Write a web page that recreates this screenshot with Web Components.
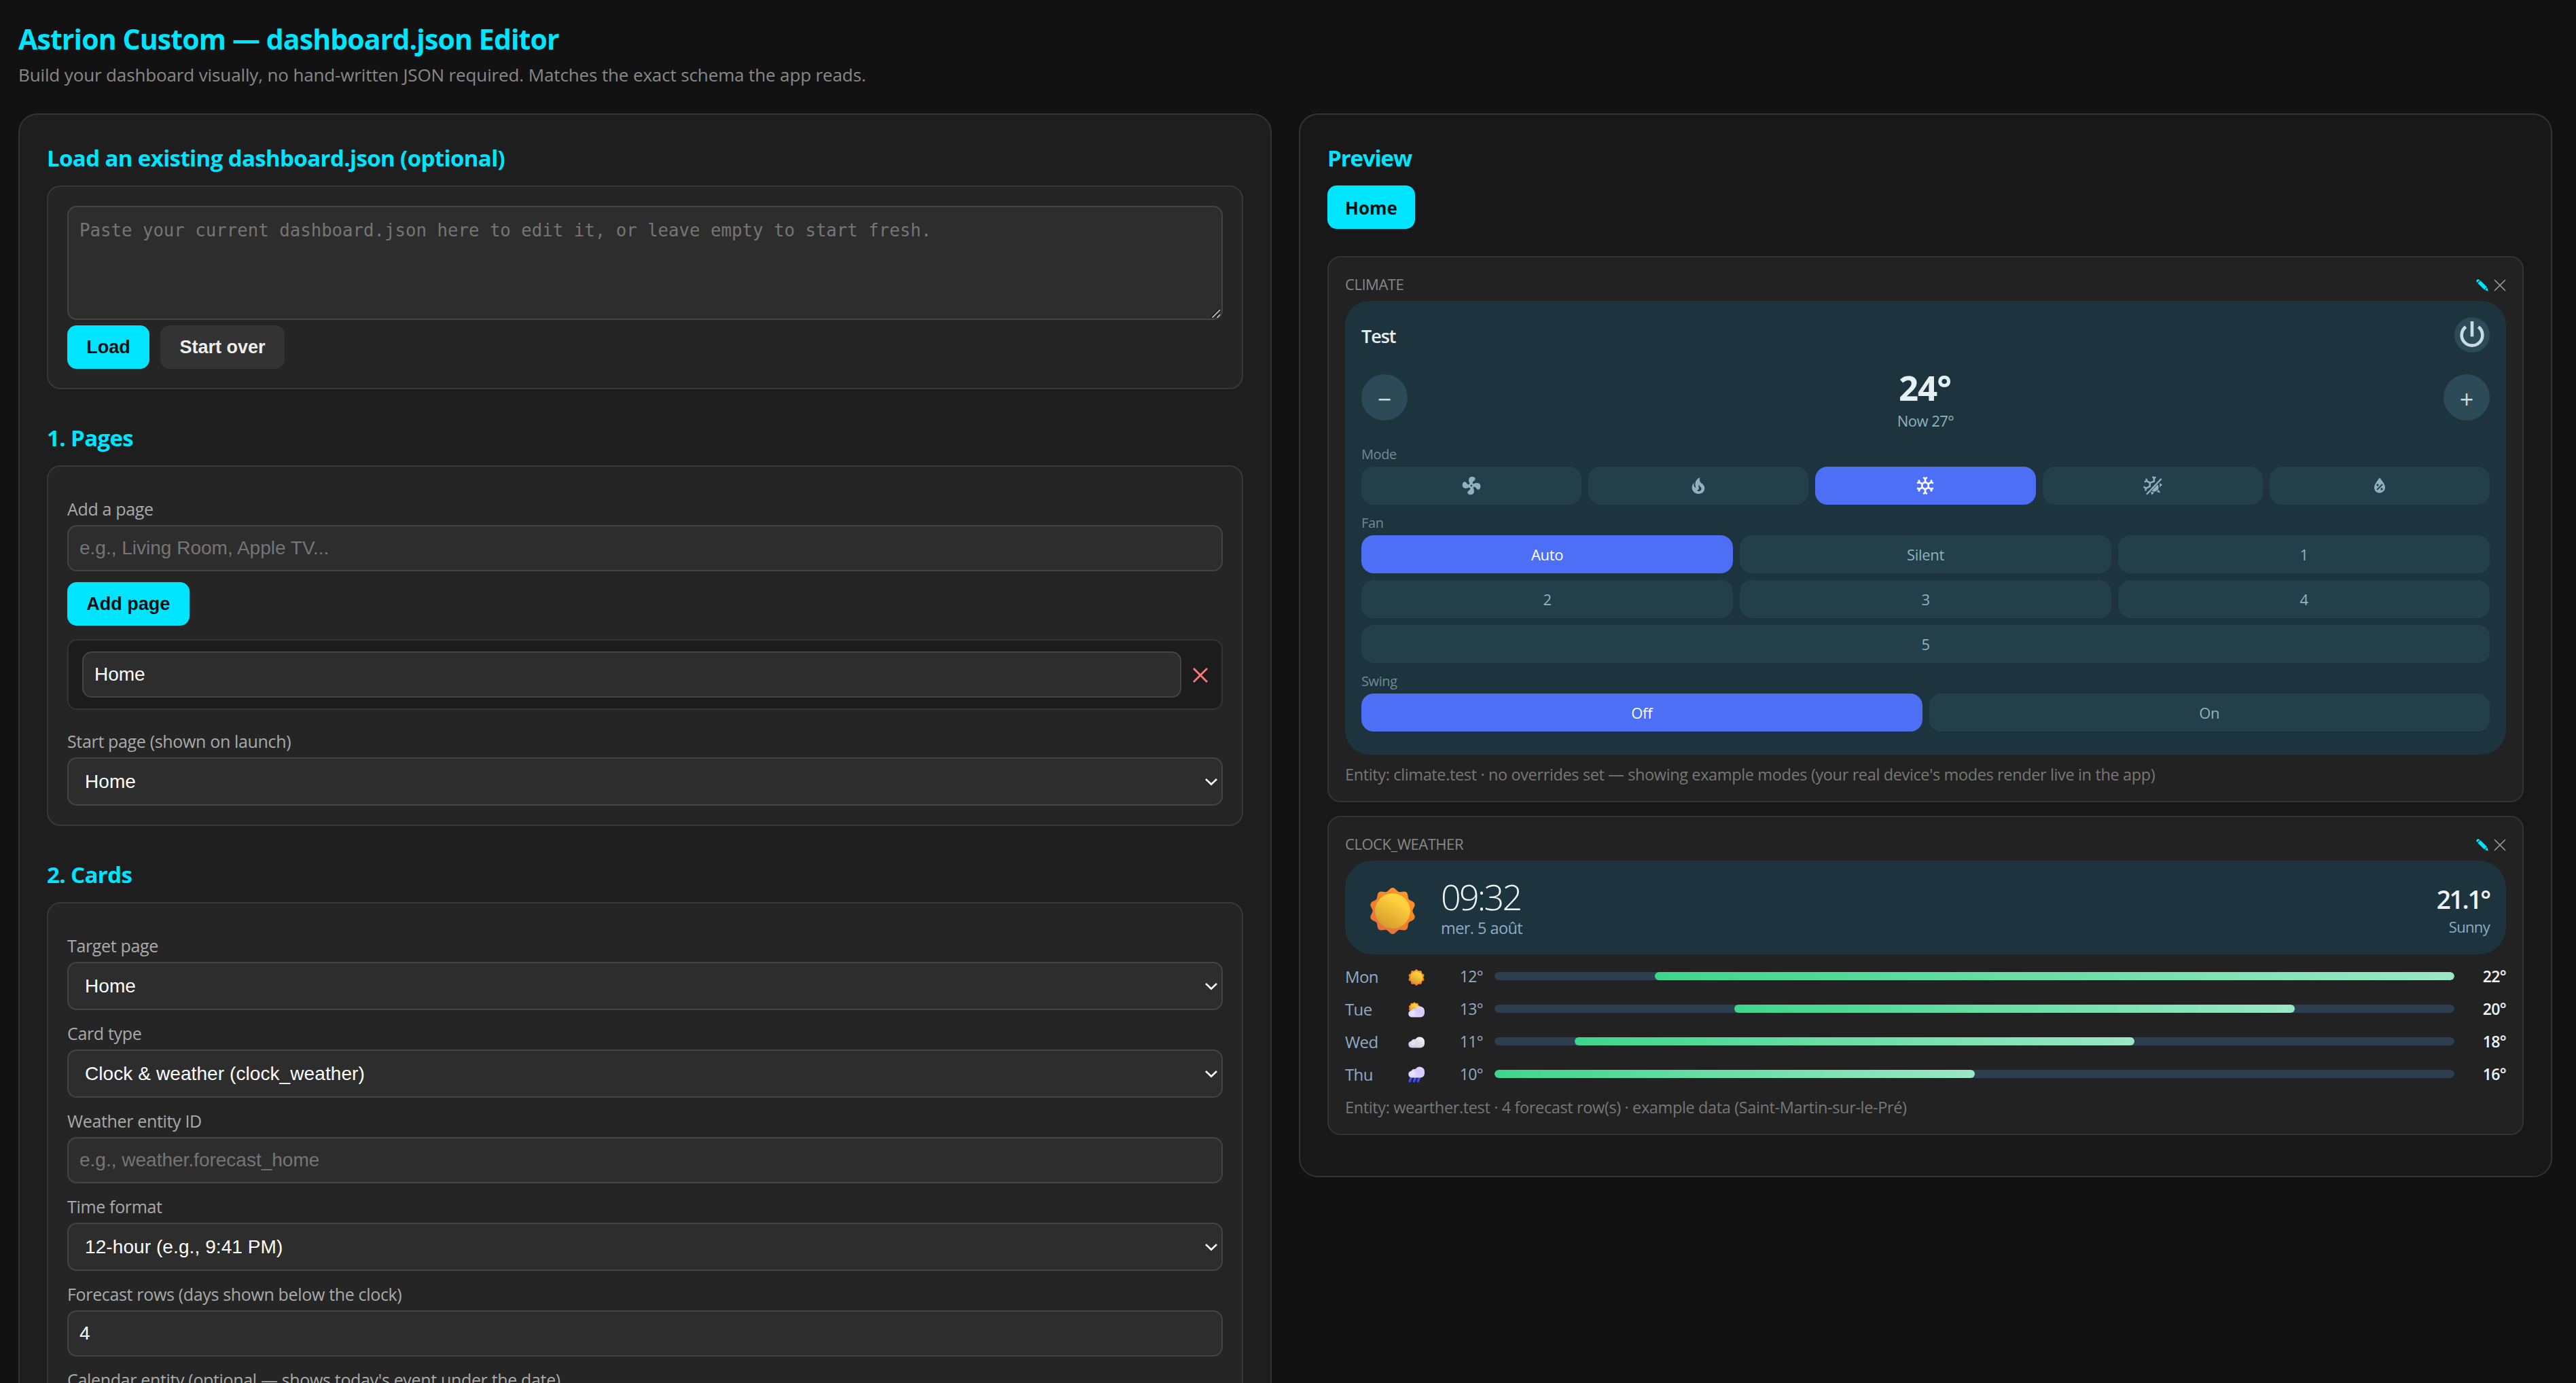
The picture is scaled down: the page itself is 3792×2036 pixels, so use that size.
<!DOCTYPE html>
<html lang="en">
<head>
<meta charset="utf-8">
<title>Astrion Custom — dashboard.json Editor</title>
<style>
    html, body {
        margin: 0;
        height: 100%;
        overflow: hidden;
        background: #121212;
    }
    body {
        font-family: "Open Sans", "Noto Sans", sans-serif;
        color: #eee;
    }
</style>
</head>
<body>

<editor-app>
    <app-panel slot="editor">
        <panel-section heading="Load an existing dashboard.json (optional)">
            <json-input placeholder="Paste your current dashboard.json here to edit it, or leave empty to start fresh."></json-input>
            <button-row>
                <ui-button>Load</ui-button>
                <ui-button kind="secondary">Start over</ui-button>
            </button-row>
        </panel-section>

        <panel-section heading="1. Pages">
            <text-field label="Add a page" placeholder="e.g., Living Room, Apple TV..."></text-field>
            <button-row spaced><ui-button>Add page</ui-button></button-row>
            <page-row value="Home"></page-row>
            <select-field label="Start page (shown on launch)" value="Home"></select-field>
        </panel-section>

        <panel-section heading="2. Cards">
            <select-field label="Target page" value="Home"></select-field>
            <select-field label="Card type" value="Clock &amp; weather (clock_weather)"></select-field>
            <text-field label="Weather entity ID" placeholder="e.g., weather.forecast_home"></text-field>
            <select-field label="Time format" value="12-hour (e.g., 9:41 PM)"></select-field>
            <text-field label="Forecast rows (days shown below the clock)" value="4"></text-field>
            <text-field label="Calendar entity (optional — shows today's event under the date)"></text-field>
        </panel-section>
    </app-panel>

    <app-panel slot="preview" dark>
        <preview-tabs heading="Preview"><span>Home</span></preview-tabs>

        <preview-card type="CLIMATE">
            <climate-card name="Test" target="24°" current="Now 27°">
                <chip-group label="Mode" columns="5">
                    <mode-chip icon="fan"></mode-chip>
                    <mode-chip icon="fire"></mode-chip>
                    <mode-chip icon="snow" active></mode-chip>
                    <mode-chip icon="auto"></mode-chip>
                    <mode-chip icon="dry"></mode-chip>
                </chip-group>
                <chip-group label="Fan" columns="3">
                    <mode-chip active>Auto</mode-chip>
                    <mode-chip>Silent</mode-chip>
                    <mode-chip>1</mode-chip>
                    <mode-chip>2</mode-chip>
                    <mode-chip>3</mode-chip>
                    <mode-chip>4</mode-chip>
                    <mode-chip wide>5</mode-chip>
                </chip-group>
                <chip-group label="Swing" columns="2">
                    <mode-chip active>Off</mode-chip>
                    <mode-chip>On</mode-chip>
                </chip-group>
            </climate-card>
            <span slot="info">Entity: climate.test · no overrides set — showing example modes (your real device's modes render live in the app)</span>
        </preview-card>

        <preview-card type="CLOCK_WEATHER">
            <clock-weather time="09:32" date="mer. 5 août" temp="21.1°" state="Sunny"></clock-weather>
            <forecast-list>
                <forecast-row day="Mon" icon="sun" low="12" high="22"></forecast-row>
                <forecast-row day="Tue" icon="partly" low="13" high="20"></forecast-row>
                <forecast-row day="Wed" icon="cloud" low="11" high="18"></forecast-row>
                <forecast-row day="Thu" icon="rain" low="10" high="16"></forecast-row>
            </forecast-list>
            <span slot="info">Entity: wearther.test · 4 forecast row(s) · example data (Saint-Martin-sur-le-Pré)</span>
        </preview-card>
    </app-panel>
</editor-app>

<script>
const define = (name, render) => {
    customElements.define(name, class extends HTMLElement {
        constructor() {
            super()
            this.attachShadow({ mode: 'open' })
        }
        connectedCallback() {
            this.shadowRoot.innerHTML = render(this)
        }
    })
}

const attr = (el, name) => (el.getAttribute(name) || '').replace(/&/g, '&amp;').replace(/"/g, '&quot;')

// 24x24 glyphs for the climate modes
const modeIcons = {
    fan: '<path d="M12,11A1,1 0 0,0 11,12A1,1 0 0,0 12,13A1,1 0 0,0 13,12A1,1 0 0,0 12,11M12.5,2C17,2 17.11,5.57 14.75,6.75C13.76,7.24 13.32,8.29 13.13,9.22C13.61,9.42 14.03,9.73 14.35,10.13C18.05,8.13 22.03,8.92 22.03,12.5C22.03,17 18.46,17.1 17.28,14.73C16.78,13.74 15.72,13.3 14.79,13.11C14.59,13.59 14.28,14 13.88,14.34C15.87,18.03 15.08,22 11.5,22C7,22 6.91,18.42 9.27,17.24C10.25,16.75 10.69,15.71 10.89,14.79C10.4,14.59 9.97,14.27 9.65,13.87C5.96,15.85 2,15.07 2,11.5C2,7 5.56,6.89 6.74,9.26C7.24,10.25 8.29,10.68 9.22,10.87C9.41,10.39 9.73,9.97 10.14,9.65C8.15,5.96 8.94,2 12.5,2Z"/>',
    fire: '<path d="M17.66 11.2C17.43 10.9 17.15 10.64 16.89 10.38C16.22 9.78 15.46 9.35 14.82 8.72C13.33 7.26 13 4.85 13.95 3C13 3.23 12.17 3.75 11.46 4.32C8.87 6.4 7.85 10.07 9.07 13.22C9.11 13.32 9.15 13.42 9.15 13.55C9.15 13.77 9 13.97 8.8 14.05C8.57 14.15 8.33 14.09 8.14 13.93C8.08 13.88 8.04 13.83 8 13.76C6.87 12.33 6.69 10.28 7.45 8.64C5.78 10 4.87 12.3 5 14.47C5.06 14.97 5.12 15.47 5.29 15.97C5.43 16.57 5.7 17.17 6 17.7C7.08 19.43 8.95 20.67 10.96 20.92C13.1 21.19 15.39 20.8 17.03 19.32C18.86 17.66 19.5 15 18.56 12.72L18.43 12.46C18.22 12 17.66 11.2 17.66 11.2M14.5 17.5C14.22 17.74 13.76 18 13.4 18.1C12.28 18.5 11.16 17.94 10.5 17.28C11.69 17 12.4 16.12 12.61 15.23C12.78 14.43 12.46 13.77 12.33 13C12.21 12.26 12.23 11.63 12.5 10.94C12.69 11.32 12.89 11.7 13.13 12C13.9 13 15.11 13.44 15.37 14.8C15.41 14.94 15.43 15.08 15.43 15.23C15.46 16.05 15.1 16.95 14.5 17.5Z"/>',
    snow: '<path d="M20.79,13.95L18.46,14.57L16.46,13.44V10.56L18.46,9.43L20.79,10.05L21.31,8.12L19.54,7.65L20,5.88L18.07,5.36L17.45,7.69L15.45,8.82L13,7.38V5.12L14.71,3.41L13.29,2L12,3.29L10.71,2L9.29,3.41L11,5.12V7.38L8.5,8.82L6.5,7.69L5.92,5.36L4,5.88L4.47,7.65L2.7,8.12L3.22,10.05L5.55,9.43L7.55,10.56V13.45L5.55,14.58L3.22,13.96L2.7,15.89L4.47,16.36L4,18.12L5.93,18.64L6.55,16.31L8.55,15.18L11,16.62V18.88L9.29,20.59L10.71,22L12,20.71L13.29,22L14.7,20.59L13,18.88V16.62L15.5,15.17L17.5,16.3L18.12,18.63L20,18.12L19.53,16.35L21.3,15.88L20.79,13.95M9.5,10.56L12,9.11L14.5,10.56V13.44L12,14.89L9.5,13.44V10.56Z"/>',
    auto: '<path d="M21.5 4.3 5.2 21.6" stroke="currentColor" stroke-width="1.8"/><path d="M11.7 2 13.4 3.8 15.3 2.4M13.4 3.8V7.2L8.8 8.9 5.2 6.7M2.8 7.8 5.2 6.7 4.8 4.2M8.8 8.9V12.8L4.4 15M2 13.2 4.4 15 4 17.6" fill="none" stroke="currentColor" stroke-width="1.9"/><path d="M17.4 10.6A4.9 4.9 0 0 1 10.8 17.6ZM19.6 9 22.6 11.1 19.6 13.6ZM18 16.2 20.6 19.8 16.5 19ZM9.7 18.8 13.6 19.4 11 22.4Z"/>',
    dry: '<path d="M12,3.25C12,3.25 6,10 6,14C6,17.32 8.69,20 12,20A6,6 0 0,0 18,14C18,10 12,3.25 12,3.25M14.47,9.97L15.53,11.03L9.53,17.03L8.47,15.97M9.75,10A1.25,1.25 0 0,1 11,11.25A1.25,1.25 0 0,1 9.75,12.5A1.25,1.25 0 0,1 8.5,11.25A1.25,1.25 0 0,1 9.75,10M14.25,14.5A1.25,1.25 0 0,1 15.5,15.75A1.25,1.25 0 0,1 14.25,17A1.25,1.25 0 0,1 13,15.75A1.25,1.25 0 0,1 14.25,14.5Z" fill-rule="evenodd"/>',
}

const gradients = `
    <defs>
        <linearGradient id="disc" x1=".75" y1=".1" x2=".25" y2="1"><stop offset=".15" stop-color="#ffd13e"/><stop offset="1" stop-color="#d4982c"/></linearGradient>
        <linearGradient id="rays" x1=".8" y1="0" x2=".2" y2="1"><stop offset="0" stop-color="#ff9a2e"/><stop offset=".45" stop-color="#f58220"/><stop offset="1" stop-color="#e2704a"/></linearGradient>
        <linearGradient id="lilac" x1="0" y1="1" x2="1" y2="0"><stop offset="0" stop-color="#e9defa"/><stop offset=".6" stop-color="#d3cafb"/><stop offset="1" stop-color="#e4dffc"/></linearGradient>
        <linearGradient id="white" x1="0" y1="1" x2="1" y2="0"><stop offset="0" stop-color="#cfc6ea"/><stop offset=".55" stop-color="#dedce6"/><stop offset="1" stop-color="#ffffff"/></linearGradient>
    </defs>`

// scalloped sun, 10 petals around (cx, cy)
const sunShape = (cx, cy, r) => {
    let d = ''
    for (let i = 0; i <= 120; i++) {
        const a = i / 120 * Math.PI * 2
        const k = r * (0.93 + 0.07 * Math.cos(a * 10))
        d += `${i ? 'L' : 'M'}${(cx + k * Math.sin(a)).toFixed(2)} ${(cy - k * Math.cos(a)).toFixed(2)}`
    }
    return `<path d="${d}Z" fill="url(#rays)"/><circle cx="${cx}" cy="${cy}" r="${r * .76}" fill="url(#disc)"/>`
}

const cloudShape = (y, fill) => `<g transform="translate(0 ${y})"><path d="M5 15.5A5 5 0 0 1 4.4 5.6A5.2 5.2 0 0 1 10.6 3A7.2 7.2 0 0 1 24 6.6V9.5A6 6 0 0 1 18 15.5Z" fill="url(#${fill})"/><circle cx="7" cy="9" r="3.6" fill="#fff" opacity=".3"/></g>`

const weatherIcons = {
    sun: sunShape(12, 12, 12),
    partly: sunShape(9, 9, 8.6) + cloudShape(7, 'lilac'),
    cloud: cloudShape(4, 'white'),
    rain: '<path d="M4.2 15.5 2.2 20.6M10.6 15.5 8.6 20.6M16.4 15.5 14.4 20.6" stroke="#3c50f0" stroke-width="3.6" stroke-linecap="round"/>' + cloudShape(0, 'lilac'),
}

define('editor-app', () => `
    <style>
        :host { display: block; max-width: 3730px; padding: 27px; }
        h1 { margin: 0; font-size: 41px; line-height: 60px; font-weight: 700; letter-spacing: -0.0215em; color: #00e5ff; white-space: nowrap; }
        p { margin: 5px 0 39px; font-size: 26px; line-height: 36px; letter-spacing: -0.005em; color: #888; }
        .columns { display: grid; grid-template-columns: 1fr 1fr; gap: 40px; align-items: start; }
    </style>
    <h1>Astrion Custom — dashboard.json Editor</h1>
    <p>Build your dashboard visually, no hand-written JSON required. Matches the exact schema the app reads.</p>
    <div class="columns">
        <slot name="editor"></slot>
        <slot name="preview"></slot>
    </div>
`)

define('app-panel', () => `
    <style>
        :host { display: block; box-sizing: border-box; padding: 40px; background: #1e1e1e; border: 2px solid #333; border-radius: 28px; }
        :host([dark]) { background: #181818; }
    </style>
    <slot></slot>
`)

define('panel-section', el => `
    <style>
        :host { display: block; margin-bottom: 48px; }
        h2 { margin: 0; padding: 1px 0 17px; font-size: 33px; line-height: 46px; font-weight: 700; letter-spacing: -0.0185em; color: #00e5ff; }
        .box { padding: 28px; background: #252525; border: 2px solid #383838; border-radius: 20px; }
    </style>
    <h2>${attr(el, 'heading')}</h2>
    <div class="box"><slot></slot></div>
`)

define('json-input', el => `
    <style>
        :host { display: block; position: relative; height: 168px; margin-bottom: 8px; }
        textarea {
            display: block; box-sizing: border-box; width: 100%; height: 100%; padding: 16px; margin: 0;
            background: #2d2d2d; color: #fff; border: 2px solid #444; border-radius: 14px; resize: none;
            font: 25.72px/36px "DejaVu Sans Mono", monospace; outline: none;
        }
        textarea::placeholder { color: #757575; }
        svg { position: absolute; right: 2px; bottom: 2px; }
    </style>
    <textarea placeholder="${attr(el, 'placeholder')}"></textarea>
    <svg width="16" height="16" viewBox="0 0 16 16" fill="none" stroke-width="1.6">
        <path d="M1 14 13 2M8 14 13 9" stroke="#111"/>
        <path d="M2.5 14.5 14 3M9.5 14.5 14 10" stroke="#ccc"/>
    </svg>
`)

define('button-row', () => `
    <style>
        :host { display: flex; gap: 16px; }
        :host([spaced]) { margin: 16px 0 20px; }
    </style>
    <slot></slot>
`)

define('ui-button', () => `
    <style>
        :host { display: block; }
        button {
            display: block; height: 64px; padding: 0 28.3px; border: 0; border-radius: 14px;
            background: #00e5ff; color: #111; font: bold 27px "Liberation Sans", Arial, sans-serif;
        }
        :host([kind=secondary]) button { background: #333; color: #eee; }
    </style>
    <button><slot></slot></button>
`)

const fieldStyle = `
    :host { display: block; position: relative; }
    label { display: block; margin: 0; padding: 17px 0 7px; font-size: 25px; line-height: 34px; letter-spacing: -0.0135em; color: #aaa; white-space: nowrap; }
    input, select {
        display: block; box-sizing: border-box; width: 100%; height: 68px; margin: 0; padding: 0 16px;
        background: #2d2d2d; color: #fff; border: 2px solid #444; border-radius: 14px; outline: none;
        font: 28px "Liberation Sans", Arial, sans-serif;
    }
    input::placeholder { color: #757575; }
    select { height: 71px; padding: 0 24px; appearance: none; letter-spacing: 0.003em; }
`

define('text-field', el => `
    <style>${fieldStyle}</style>
    <label>${attr(el, 'label')}</label>
    <input type="text" value="${attr(el, 'value')}" placeholder="${attr(el, 'placeholder')}">
`)

define('select-field', el => `
    <style>
        ${fieldStyle}
        svg { position: absolute; right: 8px; bottom: 29px; }
    </style>
    <label>${attr(el, 'label')}</label>
    <select><option>${attr(el, 'value')}</option></select>
    <svg width="18" height="12" viewBox="0 0 18 12" fill="none" stroke="#fff" stroke-width="2.6"><path d="M1 2 9 9.6 17 2"/></svg>
`)

define('page-row', el => `
    <style>
        ${fieldStyle}
        :host { display: flex; align-items: center; gap: 17px; margin-bottom: 12px; padding: 16px 20px; background: #1c1c1c; border: 2px solid #333; border-radius: 14px; }
        input { flex: 1; }
        svg { flex: none; margin-top: 2px; }
    </style>
    <input type="text" value="${attr(el, 'value')}">
    <svg width="22" height="22" viewBox="0 0 22 22" stroke="#ff7b78" stroke-width="2.8"><path d="M1 1 21 21M21 1 1 21"/></svg>
`)

define('preview-tabs', el => `
    <style>
        :host { display: block; margin-bottom: 40px; }
        h2 { margin: 0; padding: 1px 0 17px; font-size: 33px; line-height: 46px; font-weight: 700; letter-spacing: -0.033em; color: #00e5ff; }
        ::slotted(span) { display: inline-block; box-sizing: border-box; height: 64px; padding: 0 26px; background: #00e5ff; color: #111; border-radius: 14px; font-size: 26px; line-height: 66px; font-weight: 700; letter-spacing: 0; vertical-align: top; }
    </style>
    <h2>${attr(el, 'heading')}</h2>
    <slot></slot>
`)

define('preview-card', el => `
    <style>
        :host { display: block; margin-bottom: 20px; padding: 24px 24px 22px; background: #222; border: 2px solid #333; border-radius: 19px; }
        header { display: flex; align-items: center; height: 30px; margin-bottom: 10px; font-size: 22px; letter-spacing: -0.021em; color: #888; }
        header span { flex: 1; }
        svg { margin: 3px 0 0 8px; }
        footer { margin-top: 12px; font-size: 23.5px; line-height: 34px; letter-spacing: -0.0157em; color: #777; }
    </style>
    <header>
        <span>${attr(el, 'type')}</span>
        <svg width="18" height="18" viewBox="0 0 18 18" fill="#00e5ff"><path d="M.8 4.3Q-.4 1.6 1.8.5 3.8-.4 5.4 1.3L1.6 5.1ZM2.3 5.9 6.2 2 15.9 11.4 12 15.4ZM16.4 12.4 17.8 17.8 12.9 16Z"/></svg>
        <svg width="18" height="18" viewBox="0 0 18 18" stroke="#999" stroke-width="1.7"><path d="M1 1 17 17M17 1 1 17"/></svg>
    </header>
    <slot></slot>
    <footer><slot name="info"></slot></footer>
`)

define('climate-card', el => `
    <style>
        :host { display: block; padding: 24px; background: #1d343e; border-radius: 36px; }
        .head, .temp { display: flex; justify-content: space-between; align-items: center; }
        .head { height: 52px; font-size: 27px; font-weight: 600; letter-spacing: -0.04em; color: #e6f0f2; }
        .name { padding-top: 3px; }
        .power { display: flex; width: 52px; height: 52px; border-radius: 50%; background: #2c4b56; }
        .temp { height: 133px; }
        .round { display: flex; align-items: center; justify-content: center; box-sizing: border-box; width: 68px; height: 68px; margin-bottom: 1px; padding-top: 5px; border-radius: 50%; background: #2c4b56; color: #c9dce2; font-size: 36px; line-height: 62px; }
        .values { padding-top: 3px; text-align: center; }
        .target { margin-right: 2px; font-size: 51px; line-height: 60px; font-weight: 700; letter-spacing: -0.02em; color: #e6f0f2; }
        .current { margin-top: 4px; font-size: 22px; line-height: 30px; letter-spacing: -0.023em; color: #8fb3bd; }
    </style>
    <div class="head">
        <span class="name">${attr(el, 'name')}</span>
        <span class="power"><svg width="52" height="52" viewBox="0 0 52 52" fill="none" stroke="#c9dce2" stroke-width="4.6"><path d="M16.7 14.2A15.3 15.3 0 1 0 35.3 14.2M26 6V28.6"/></svg></span>
    </div>
    <div class="temp">
        <span class="round">−</span>
        <div class="values">
            <div class="target">${attr(el, 'target')}</div>
            <div class="current">${attr(el, 'current')}</div>
        </div>
        <span class="round">+</span>
    </div>
    <slot></slot>
`)

define('chip-group', el => `
    <style>
        :host { display: block; margin-bottom: 10px; }
        .label { padding: 1px 0 2px; font-size: 20px; line-height: 32px; letter-spacing: -0.02em; color: #6d8c95; }
        .chips { display: grid; grid-template-columns: repeat(${attr(el, 'columns')}, 1fr); gap: 10px; }
    </style>
    <div class="label">${attr(el, 'label')}</div>
    <div class="chips"><slot></slot></div>
`)

define('mode-chip', el => `
    <style>
        :host { display: flex; align-items: center; justify-content: center; height: 56px; border-radius: 18px; background: #23404a; color: #8fb3bd; font-size: 22px; letter-spacing: -0.015em; }
        :host([active]) { background: #4c6ff6; color: #fff; }
        :host([wide]) { grid-column: 1 / -1; }
    </style>
    ${el.hasAttribute('icon')
        ? `<svg width="32" height="32" viewBox="0 0 24 24" fill="currentColor">${modeIcons[el.getAttribute('icon')]}</svg>`
        : '<slot></slot>'}
`)

define('clock-weather', el => `
    <style>
        :host { display: flex; align-items: center; box-sizing: border-box; height: 138px; padding: 0 24px; background: #1d343e; border-radius: 40px; }
        svg { margin: 9px 36px 0 11px; }
        .clock { flex: 1; }
        .time { font-size: 52px; line-height: 58px; font-weight: 300; letter-spacing: -0.053em; color: #f1f5f9; }
        .date { padding-top: 2px; font-size: 23.5px; line-height: 31px; letter-spacing: -0.024em; color: #8fabc7; }
        .now { padding-top: 5px; text-align: right; }
        .temp { font-size: 37px; line-height: 50px; font-weight: 600; letter-spacing: -0.06em; color: #f1f5f9; }
        .state { font-size: 22px; line-height: 30px; letter-spacing: -0.03em; color: #8fabc7; }
    </style>
    <svg width="70" height="70" viewBox="0 0 24.6 24.6">${gradients}<g transform="translate(.3 .3)">${weatherIcons.sun}</g></svg>
    <div class="clock">
        <div class="time">${attr(el, 'time')}</div>
        <div class="date">${attr(el, 'date')}</div>
    </div>
    <div class="now">
        <div class="temp">${attr(el, 'temp')}</div>
        <div class="state">${attr(el, 'state')}</div>
    </div>
`)

define('forecast-list', () => `
    <style>
        :host { display: flex; flex-direction: column; gap: 12px; margin-top: 14px; padding-bottom: 2px; }
    </style>
    <slot></slot>
`)

define('forecast-row', el => {
    // bars share one 10°–22° scale
    const low = Number(el.getAttribute('low'))
    const high = Number(el.getAttribute('high'))
    const pos = t => (t - 10) / 12 * 100
    return `
    <style>
        :host { display: grid; grid-template-columns: 80px 50px 73px 1fr 76px; align-items: center; height: 36px; font-size: 24px; line-height: 35px; letter-spacing: -0.025em; color: #8fabc7; }
        svg { display: block; margin: 4px auto 0; overflow: visible; }
        span { padding-top: 1px; }
        .low, .high { text-align: right; }
        .low { font-size: 23px; }
        .high { font-size: 23px; font-weight: 600; color: #f1f5f9; }
        .bar { height: 12px; margin-left: 17px; border-radius: 6px; background: #2c3e50; overflow: hidden; }
        .fill { height: 12px; border-radius: 6px; background: linear-gradient(90deg, #3dd68c, #9be7c4); }
    </style>
    <span>${attr(el, 'day')}</span>
    <svg width="24" height="24" viewBox="0 0 24 24">${gradients}${weatherIcons[el.getAttribute('icon')]}</svg>
    <span class="low">${low}°</span>
    <div class="bar"><div class="fill" style="margin-left:${pos(low)}%;width:${pos(high) - pos(low)}%"></div></div>
    <span class="high">${high}°</span>
`})
</script>
</body>
</html>
